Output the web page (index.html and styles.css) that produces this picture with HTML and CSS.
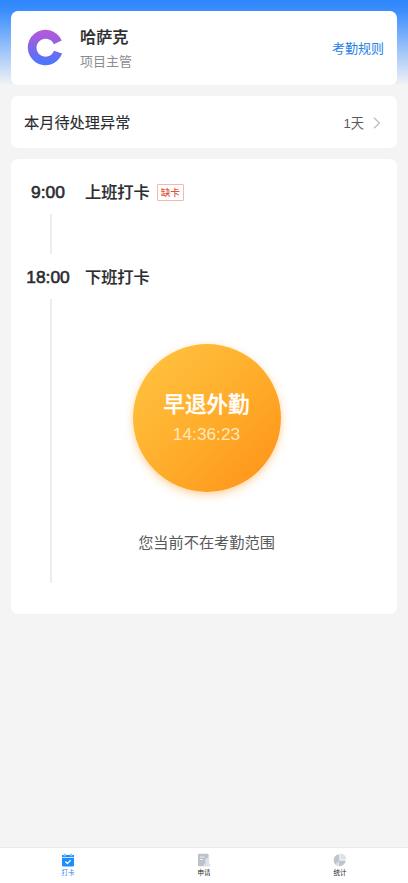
FILE: index.html
```html
<!DOCTYPE html>
<html lang="zh-CN">
<head>
<meta charset="utf-8">
<meta name="viewport" content="width=device-width, initial-scale=1">
<title>考勤打卡</title>
<link rel="stylesheet" href="styles.css">
</head>
<body>
<main class="content">
  <section class="card profile">
    <svg class="avatar" viewBox="-.8 -.3 40 40">
      <defs><linearGradient id="brand" x1="0" y1="0" x2="0" y2="1"><stop offset="0" stop-color="#bd57da"/><stop offset=".5" stop-color="#8065e8"/><stop offset="1" stop-color="#4678ff"/></linearGradient></defs>
      <path fill="url(#brand)" d="M34.9 12.2A17.7 17.7 0 1 0 35.3 25.2L27.2 22.4A9 9 0 1 1 27 15.9Z"/>
    </svg>
    <div class="person">
      <h1 class="name">哈萨克</h1>
      <p class="role">项目主管</p>
    </div>
    <a class="rules">考勤规则</a>
  </section>

  <section class="card pending">
    <span class="pending-title">本月待处理异常</span>
    <span class="pending-count">1天</span>
    <svg class="chevron" viewBox="0 0 8 12"><path d="M1 .8 6.4 6 1 11.2" fill="none" stroke="#bbbbc0" stroke-width="1.2"/></svg>
  </section>

  <section class="card shifts">
    <div class="shift-head">
      <span class="time">9:00</span><span class="label">上班打卡</span><span class="tag">缺卡</span>
    </div>
    <div class="shift-body morning"></div>
    <div class="shift-head">
      <span class="time">18:00</span><span class="label">下班打卡</span>
    </div>
    <div class="shift-body evening">
      <button class="punch">
        <span class="punch-label">早退外勤</span>
        <span class="punch-time">14:36:23</span>
      </button>
      <p class="range">您当前不在考勤范围</p>
    </div>
  </section>
</main>

<nav class="tabs">
  <a class="tab active">
    <svg class="tab-icon" viewBox="0 0 14 14"><path fill="#75c5ff" d="M2.8.8h2v3h-2zM9.2.8h2v3h-2z"/><path fill="#1d8cff" d="M1 2h1.8v1.2h2V2h4.4v1.2h2V2H13v2H1zM1 4.7h12v7.6a1.1 1.1 0 0 1-1.1 1.1H2.1A1.1 1.1 0 0 1 1 12.3z"/><path d="m4.4 8.5 2 2 3.4-3.4" fill="none" stroke="#fff" stroke-width="1.3"/></svg>
    <span>打卡</span>
  </a>
  <a class="tab">
    <svg class="tab-icon" viewBox="0 0 14 14"><path fill="#bcc1cb" d="M2 .8h8.6a1 1 0 0 1 1 1v11.4H2a1 1 0 0 1-1-1V1.8a1 1 0 0 1 1-1z"/><path d="M3 4h4.5M3 6.5h2.6" stroke="#f2f3f5" stroke-width=".9"/><path fill="#dce0e7" stroke="#f5f6f8" stroke-width=".4" d="M8.8 8.5a1.9 1.9 0 1 1 3 0v1.8l1.6 1v2H7.2v-2l1.6-1z"/></svg>
    <span>申请</span>
  </a>
  <a class="tab">
    <svg class="tab-icon" viewBox="0 0 14 14"><path fill="#bfc4cd" d="M6.4 1.2v6.2h6.2A6 6 0 1 1 6.4 1.2z"/><path fill="#dce0e7" d="M7.3.5a6 6 0 0 1 6 6h-6z"/><path fill="#dce0e7" d="M6.1 7.8v5.4a6 6 0 0 1-3.8-1.8z"/></svg>
    <span>统计</span>
  </a>
</nav>
</body>
</html>
```
FILE: styles.css
```css
* { box-sizing: border-box; }

body {
  margin: 0;
  height: 883px;
  display: flex;
  flex-direction: column;
  background: #f4f4f4 linear-gradient(#2e86fb 0, #3d8ffc 12px, #a9cbf8 55px, #f4f4f4 86px) no-repeat 0 0 / 100% 86px;
  font-family: "Liberation Sans", "Noto Sans CJK SC", sans-serif;
  color: #2b2c2f;
}

h1, p { margin: 0; font-weight: 400; }

.content {
  flex: 1;
  padding: 11px 11px 0;
}

.card {
  background: #fff;
  border-radius: 7px;
}

.profile {
  height: 74px;
  display: flex;
  align-items: center;
  padding: 0 13px 0 15px;
}

.avatar {
  width: 40px;
  height: 40px;
}

.person {
  flex: 1;
  padding: 2px 0 0 14px;
}

.name {
  font-size: 16.2px;
  line-height: 24px;
  font-weight: 500;
  -webkit-text-stroke: .2px;
}

.role {
  font-size: 13px;
  line-height: 25px;
  color: #8b8c91;
}

.rules {
  padding-bottom: 2px;
  font-size: 13px;
  color: #2580e8;
}

.pending {
  height: 52px;
  margin-top: 11px;
  display: flex;
  align-items: center;
  padding: 0 16px 0 13px;
}

.pending-title {
  flex: 1;
  padding-bottom: 2px;
  font-size: 15.2px;
  -webkit-text-stroke: .15px;
}

.pending-count {
  font-size: 13.2px;
  color: #58595c;
}

.chevron {
  width: 8px;
  height: 12px;
  margin: 1px 0 0 9px;
}

.shifts {
  height: 455.5px;
  margin-top: 10.5px;
  padding-top: 21.5px;
}

.shift-head {
  height: 25px;
  display: flex;
  align-items: center;
}

.time {
  width: 74px;
  text-align: center;
  font-size: 17.4px;
  -webkit-text-stroke: .6px;
}

.label {
  padding-bottom: 3px;
  font-size: 16.2px;
  font-weight: 500;
  -webkit-text-stroke: .2px;
}

.tag {
  height: 17px;
  width: 27px;
  margin: -1px 0 0 7px;
  border: 1px solid #f3b9af;
  border-radius: 1px;
  color: #e0563f;
  font-size: 9.6px;
  font-weight: 500;
  line-height: 15px;
  text-align: center;
}

.shift-body {
  margin: 9px 0 0 39px;
  border-left: 2px solid #ededee;
}

.morning {
  height: 40px;
  margin-bottom: 11px;
}

.evening {
  height: 284px;
  padding: 45px 36px 0 0;
  display: flex;
  flex-direction: column;
  align-items: center;
}

.punch {
  width: 148px;
  height: 148px;
  padding: 0;
  border: 0;
  border-radius: 50%;
  display: flex;
  flex-direction: column;
  align-items: center;
  background: linear-gradient(135deg, #ffc340 5%, #ffae2c 50%, #ff9318 95%);
  box-shadow: 0 3px 9px rgba(255, 150, 30, .42);
  font-family: inherit;
  color: #fff;
}

.punch-label {
  margin-top: 45px;
  font-size: 21.6px;
  line-height: 32px;
  font-weight: 500;
  -webkit-text-stroke: .3px;
}

.punch-time {
  margin-top: 2px;
  font-size: 17.3px;
  line-height: 22px;
  color: #ffe7bd;
}

.range {
  margin-top: 39px;
  font-size: 15.2px;
  line-height: 24px;
  color: #58595c;
}

.tabs {
  height: 36px;
  display: flex;
  background: #fff;
  border-top: 1px solid #ebebed;
}

.tab {
  flex: 1;
  display: flex;
  flex-direction: column;
  align-items: center;
  padding-top: 5px;
  font-size: 6.5px;
  line-height: 11px;
  color: #222;
}

.tab-icon {
  width: 14px;
  height: 14px;
}

.active { color: #1d7df0; }
```
